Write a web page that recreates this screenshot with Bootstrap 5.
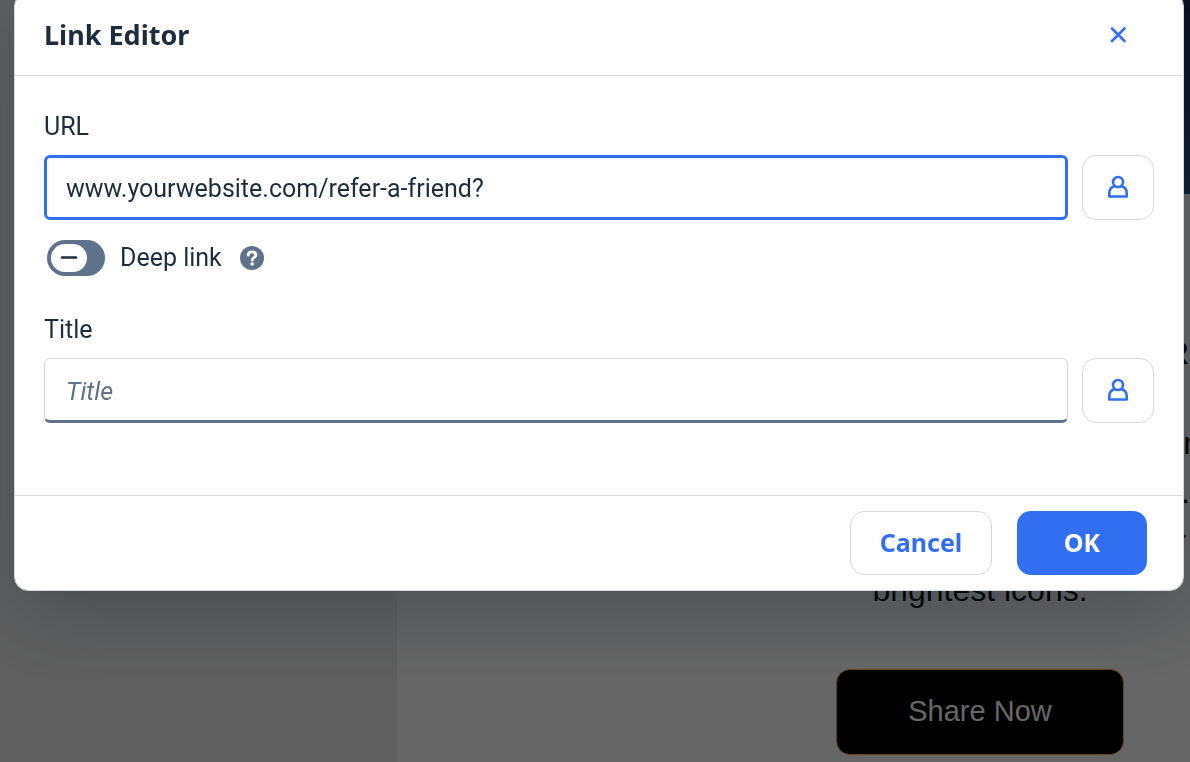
<!DOCTYPE html>
<html lang="en">
<head>
<meta charset="utf-8">
<meta name="viewport" content="width=device-width, initial-scale=1">
<title>Link Editor</title>
<link href="https://cdn.jsdelivr.net/npm/bootstrap@5.3.0/dist/css/bootstrap.min.css" rel="stylesheet">
<style>
  :root { --accent: #326ff0; --ink: #1d2d3e; --slate: #5e738b; --line: #d5d9dc; }
  body { font-family: Roboto, "Open Sans", sans-serif; font-size: 25px; line-height: 30px; color: var(--ink); overflow: hidden; }
  .side-panel { background: #f0f0f0; }
  .mail { width: 420px; font-family: "Liberation Sans", Arial, sans-serif; font-size: 32px; line-height: 49px; color: #000; }
  .mail-hero { height: 194px; background: linear-gradient(#15244f, #1b467c); }
  .mail-lead { margin-top: 135px; padding-right: 1px; }
  .mail-text { margin-top: 41px; }
  .cut-word { margin-right: -20px; }
  .btn-share { width: 288px; height: 86px; margin-top: 54px; background: #000; color: #fff; border: 1px solid #f0b400; border-radius: 14px; font-size: 29px; }
  .modal-backdrop { --bs-backdrop-opacity: .6; }
  .editor-dialog { max-width: none; margin: -8px 6px 0 14px; }
  .editor { border: 1px solid var(--line); border-radius: 14px; color: var(--ink); box-shadow: 0 20px 80px rgba(26, 36, 48, .36); }
  .editor .modal-header { height: 83px; padding: 2px 29px 0; border-color: var(--line); }
  .editor .modal-title { font: 700 27px/34px "Noto Sans", sans-serif; }
  .btn-x { width: 72px; height: 48px; }
  .editor .modal-body { padding: 36px 29px 72px; }
  .editor .form-label { margin-bottom: 13px; display: block; }
  .field-row { gap: 14px; }
  .field { height: 65px; padding: 4px 21px 0; font-size: 25px; color: var(--ink); border: 1px solid var(--line); border-bottom: 3px solid var(--slate); border-radius: 6px; }
  .field::placeholder { color: var(--slate); font-style: italic; }
  .field-active, .field-active:focus { border: 3px solid var(--accent); padding: 2px 19px 0; box-shadow: none; }
  .btn-person { width: 72px; border: 1px solid var(--line); border-radius: 14px; }
  .btn-person svg { display: block; margin: 0 auto 2px; }
  .switch-row { margin: 20px 0 39px 3px; }
  .switch-row .form-check-input { width: 58px; height: 36px; margin: 0 15px 0 0; float: none; border: 0; border-radius: 18px; background: var(--slate) url("data:image/svg+xml,%3Csvg xmlns='http://www.w3.org/2000/svg' viewBox='0 0 58 36'%3E%3Crect x='4' y='4' width='36' height='28' rx='14' fill='%23fff'/%3E%3Cpath d='M15 17.500h14' stroke='%231d2d3e' stroke-width='2.600' stroke-linecap='round'/%3E%3C/svg%3E") center / 58px 36px no-repeat; }
  .btn-help { margin-left: 18px; }
  .editor .modal-footer { padding: 15px 36px 15px; gap: 25px; border-color: var(--line); }
  .editor .modal-footer > * { margin: 0; }
  .btn-act { height: 64px; padding: 0 0 2px; border-radius: 14px; font: 700 25px/30px "Noto Sans", sans-serif; }
  .btn-cancel { width: 142px; color: var(--accent); border: 1px solid var(--line); }
  .btn-ok { width: 130px; color: #fff; background: var(--accent); }
</style>
</head>
<body>
<main class="container-fluid p-0">
  <div class="row g-0 min-vh-100">
    <aside class="col-4 side-panel"></aside>
    <section class="col-8 bg-white">
      <div class="mail ms-auto">
        <div class="mail-hero"></div>
        <div class="mail-lead text-end">R</div>
        <div class="mail-text text-end">
          <div class="cut-word">m</div>
          <div>.</div>
          <div class="pe-1">r</div>
        </div>
        <div class="text-center">brightest icons.</div>
        <div class="text-center"><button type="button" class="btn btn-share">Share Now</button></div>
      </div>
    </section>
  </div>
</main>

<div class="modal-backdrop show"></div>

<div class="modal show d-block overflow-hidden" tabindex="-1" role="dialog" aria-labelledby="editorTitle">
  <div class="modal-dialog editor-dialog">
    <form class="modal-content editor">
      <div class="modal-header">
        <h1 class="modal-title" id="editorTitle">Link Editor</h1>
        <button type="button" class="btn btn-x p-0 d-flex align-items-center justify-content-center" aria-label="Close">
          <svg width="18" height="18" viewBox="0 0 18 18" fill="none" stroke="#326ff0" stroke-width="2.6" stroke-linecap="round"><path d="M3 2.500l12.500 12.500M15.500 2.500L3 15"/></svg>
        </button>
      </div>
      <div class="modal-body">
        <label class="form-label" for="url">URL</label>
        <div class="d-flex field-row">
          <input type="text" class="form-control field field-active" id="url" value="www.yourwebsite.com/refer-a-friend?">
          <button type="button" class="btn btn-person p-0 flex-shrink-0" aria-label="Personalize URL">
            <svg width="22" height="24" viewBox="0 0 22 24" fill="none" stroke="#326ff0" stroke-width="2.6" stroke-linejoin="round"><circle cx="11" cy="7" r="5"/><path d="M7.600 11C4.500 12 2.300 14.500 2.300 18v3.500h17.400V18c0-3.500-2.200-6-5.300-7"/></svg>
          </button>
        </div>
        <div class="d-flex align-items-center switch-row">
          <input type="checkbox" class="form-check-input" id="deep">
          <label for="deep">Deep link</label>
          <button type="button" class="btn btn-help p-0 border-0 d-flex" aria-label="Help">
            <svg width="24" height="24" viewBox="0 0 24 24" fill="none"><circle cx="12" cy="12" r="12" fill="#5e738b"/><path d="M8.200 9.200C8.200 7 9.800 5.900 12 5.900s3.900 1.200 3.900 3.200c0 2.400-3.700 2.700-3.700 5.100" stroke="#fff" stroke-width="2.800" stroke-linecap="round"/><circle cx="12.200" cy="18" r="1.800" fill="#fff"/></svg>
          </button>
        </div>
        <label class="form-label" for="title">Title</label>
        <div class="d-flex field-row">
          <input type="text" class="form-control field" id="title" placeholder="Title">
          <button type="button" class="btn btn-person p-0 flex-shrink-0" aria-label="Personalize title">
            <svg width="22" height="24" viewBox="0 0 22 24" fill="none" stroke="#326ff0" stroke-width="2.6" stroke-linejoin="round"><circle cx="11" cy="7" r="5"/><path d="M7.600 11C4.500 12 2.300 14.500 2.300 18v3.500h17.400V18c0-3.500-2.200-6-5.300-7"/></svg>
          </button>
        </div>
      </div>
      <div class="modal-footer">
        <button type="button" class="btn btn-act btn-cancel">Cancel</button>
        <button type="button" class="btn btn-act btn-ok">OK</button>
      </div>
    </form>
  </div>
</div>
<script src="https://cdn.jsdelivr.net/npm/bootstrap@5.3.0/dist/js/bootstrap.bundle.min.js"></script>
</body>
</html>
